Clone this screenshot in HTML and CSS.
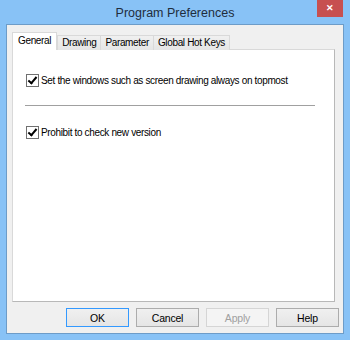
FILE: index.html
```html
<!DOCTYPE html>
<html lang="en">
<head>
    <meta charset="UTF-8">
    <title>Program Preferences</title>
    <link rel="stylesheet" href="styles.css">
</head>
<body>
    <div class="window">
        <div class="titlebar">
            <div class="title">Program Preferences</div>
            <div class="close-button">&#10005;</div>
        </div>
        <div class="client">
            <div class="tabs">
                <div class="tab selected">General</div>
                <div class="tab">Drawing</div>
                <div class="tab">Parameter</div>
                <div class="tab">Global Hot Keys</div>
            </div>
            <div class="tab-panel">
                <label class="check-row">
                    <span class="checkbox checked"></span>
                    Set the windows such as screen drawing always on topmost
                </label>
                <div class="separator"></div>
                <label class="check-row">
                    <span class="checkbox checked"></span>
                    Prohibit to check new version
                </label>
            </div>
            <div class="button-row">
                <button class="default">OK</button>
                <button>Cancel</button>
                <button disabled>Apply</button>
                <button>Help</button>
            </div>
        </div>
    </div>
</body>
</html>
```

FILE: styles.css
```css
body {
    margin: 0;
    font-family: "Liberation Sans", Arial, sans-serif;
    font-size: 10px;
    letter-spacing: -0.35px;
    color: #000;
}
.window {
    width: 350px;
    height: 340px;
    box-sizing: border-box;
    background-color: #88c2f6;
    padding: 0 6px 6px 6px;
    display: flex;
    flex-direction: column;
}
.titlebar {
    height: 24px;
    flex: none;
    position: relative;
    display: flex;
    justify-content: center;
}
.title {
    font-size: 12.5px;
    letter-spacing: 0;
    color: #1f2d3d;
    line-height: 27px;
}
.close-button {
    position: absolute;
    right: 1px;
    top: 0;
    width: 26px;
    height: 17px;
    background-color: #c75050;
    color: #fff;
    font-size: 9px;
    font-weight: bold;
    text-align: center;
    line-height: 17px;
}
.client {
    flex: 1;
    background-color: #f0f0f0;
    border: 1px solid #6d9cc8;
    padding: 7px 6px 0 5px;
    display: flex;
    flex-direction: column;
}
.tabs {
    display: flex;
    align-items: flex-end;
    height: 18px;
    position: relative;
    z-index: 1;
}
.tab {
    height: 15px;
    line-height: 14px;
    padding: 0 4px;
    box-sizing: border-box;
    border: 1px solid #d9d9d9;
    border-bottom: none;
    background: linear-gradient(#f0f0f0, #e5e5e5);
    margin-left: -1px;
    white-space: nowrap;
}
.tab.selected {
    height: 18px;
    line-height: 15px;
    padding: 0 5px;
    background: #fff;
    margin-left: 0;
    margin-right: 1px;
}
.tab-panel {
    height: 253px;
    width: 323px;
    box-sizing: border-box;
    background-color: #fff;
    border: 1px solid #d9d9d9;
    border-right-color: #b8b8b8;
    border-bottom-color: #b8b8b8;
    margin-top: -1px;
    padding: 23px 0 0 13px;
}
.check-row {
    display: flex;
    align-items: center;
    gap: 2px;
    height: 14px;
    white-space: nowrap;
}
.checkbox {
    width: 11px;
    height: 11px;
    border: 1px solid #707070;
    background: #fff;
    display: inline-block;
    position: relative;
    flex: none;
}
.checkbox.checked::after {
    content: "";
    position: absolute;
    left: 3px;
    top: 0;
    width: 3px;
    height: 7px;
    border: solid #000;
    border-width: 0 2px 2px 0;
    transform: rotate(40deg);
}
.separator {
    width: 290px;
    margin: 18px 0 18px -1px;
    border-top: 1px solid #a0a0a0;
    border-bottom: 1px solid #fff;
}
.button-row {
    display: flex;
    justify-content: flex-end;
    gap: 7px;
    margin-top: 6px;
    margin-right: -2px;
}
button {
    width: 63px;
    height: 19px;
    font-family: inherit;
    font-size: 10.5px;
    letter-spacing: -0.2px;
    color: #000;
    background: linear-gradient(#f0f0f0, #e5e5e5);
    border: 1px solid #acacac;
    padding: 0;
}
button.default {
    border-color: #3399ff;
}
button:disabled {
    color: #a0a0a0;
    border-color: #d5d5d5;
    background: #f4f4f4;
}
```
